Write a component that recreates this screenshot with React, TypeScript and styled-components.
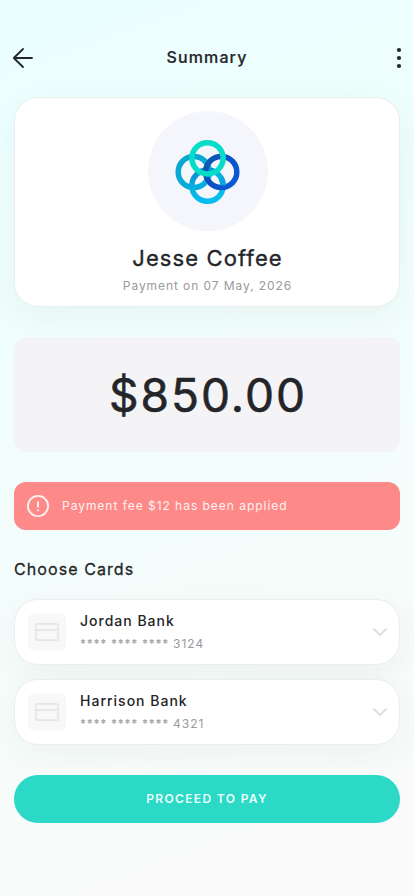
import React from "react";
import styled, { createGlobalStyle } from "styled-components";

const GlobalStyle = createGlobalStyle`
  *, *::before, *::after { box-sizing: border-box; }
  body { margin: 0; }
  svg { display: block; }
`;

const Screen = styled.main`
  display: flex;
  flex-direction: column;
  width: 100%;
  height: 896px;
  padding: 38px 14px 0;
  overflow: hidden;
  background: linear-gradient(160deg, #ebffff 0%, #f0fefc 35%, #f5fdfb 65%, #fafafa 92%);
  color: #242529;
  font-family: Inter, "Liberation Sans", sans-serif;
  letter-spacing: 1px;
`;

const Header = styled.header`
  display: grid;
  grid-template-columns: 24px 1fr 24px;
  align-items: center;
  height: 40px;
  margin: 0 -3px 19px -3px;
`;

const IconButton = styled.button`
  display: flex;
  justify-content: flex-end;
  padding: 0;
  border: 0;
  background: none;
  color: #242529;
`;

const Title = styled.h1`
  margin: 0;
  padding-bottom: 2px;
  font-size: 16px;
  line-height: 24px;
  font-weight: 500;
  letter-spacing: 1.15px;
  text-align: center;
  -webkit-text-stroke: 0.2px currentColor;
`;

const Panel = styled.section`
  background: #fff;
  border: 1px solid #ebeeee;
  border-radius: 24px;
  box-shadow: 0 8px 32px rgba(40, 50, 50, 0.05);
`;

const Payee = styled(Panel)`
  display: flex;
  flex-direction: column;
  align-items: center;
  flex: 0 0 210px;
  padding-top: 13px;
`;

const Avatar = styled.div`
  display: grid;
  place-items: center;
  width: 120px;
  height: 120px;
  margin-left: 2px;
  border-radius: 50%;
  background: #f4f6fb;
`;

const PayeeName = styled.h2`
  margin: 11px 0 0 1px;
  font-size: 22px;
  line-height: 32px;
  font-weight: 400;
  letter-spacing: 1.1px;
  -webkit-text-stroke: 0.35px currentColor;
`;

const PayeeDate = styled.p`
  margin: 3px 0 0 1px;
  color: #9a9a9c;
  font-size: 12px;
  line-height: 18px;
  letter-spacing: 0.92px;
`;

const Amount = styled.section`
  display: grid;
  place-items: center;
  flex: 0 0 115px;
  margin-top: 30px;
  padding-left: 2px;
  border-radius: 12px;
  background: #f4f4f7;
  font-size: 46px;
  font-weight: 400;
  letter-spacing: 2px;
  -webkit-text-stroke: 0.6px currentColor;
`;

const Notice = styled.section`
  display: flex;
  align-items: center;
  gap: 12px;
  flex: 0 0 48px;
  margin-top: 30px;
  padding: 0 12px;
  border-radius: 12px;
  background: #fd8a89;
  color: #fff1f1;
  font-size: 12px;
  letter-spacing: 0.97px;
`;

const NoticeText = styled.span`
  padding-bottom: 2px;
`;

const SectionTitle = styled.h3`
  margin: 27px 0 18px;
  font-size: 16px;
  line-height: 24px;
  font-weight: 400;
  letter-spacing: 1.08px;
  -webkit-text-stroke: 0.3px currentColor;
`;

const CardList = styled.div`
  display: flex;
  flex-direction: column;
  gap: 14px;
`;

const BankCard = styled(Panel)`
  display: flex;
  align-items: center;
  height: 66px;
  padding: 0 7px 0 13px;
`;

const CardIcon = styled.div`
  display: grid;
  place-items: center;
  width: 38px;
  height: 38px;
  border-radius: 7px;
  background: #f8f8f8;
`;

const CardText = styled.div`
  flex: 1;
  margin-left: 14px;
`;

const BankName = styled.div`
  font-size: 14px;
  line-height: 20px;
  font-weight: 500;
`;

const CardNumber = styled.div`
  color: #9a9a9c;
  font-size: 12px;
  line-height: 18px;
  margin-top: 4px;
`;

const Mask = styled.span`
  letter-spacing: 0.72px;
`;

const PayButton = styled.button`
  height: 48px;
  margin-top: 30px;
  padding: 0;
  border: 0;
  border-radius: 24px;
  background: #2bd9c6;
  color: #e9fffb;
  font: 600 12px/18px Inter, "Liberation Sans", sans-serif;
  letter-spacing: 1.35px;
`;

const BackIcon = () => (
  <svg width="24" height="24" viewBox="0 0 24 24" fill="none" stroke="currentColor" strokeWidth="1.8" strokeLinecap="round" strokeLinejoin="round">
    <path d="M21 12H3M12 3L2.8 12L12 21" />
  </svg>
);

const MoreIcon = () => (
  <svg width="8" height="24" viewBox="0 0 8 24" fill="currentColor">
    <circle cx="4" cy="4" r="2.1" />
    <circle cx="4" cy="12" r="2.1" />
    <circle cx="4" cy="20" r="2.1" />
  </svg>
);

const RingsLogo = () => (
  <svg width="66" height="66" viewBox="0.5 -0.5 66 66" fill="none" strokeWidth="5.5">
    <defs>
      <linearGradient id="left" x1="0" y1="0" x2="1" y2="1">
        <stop offset="0" stopColor="#0aa5cf" />
        <stop offset="1" stopColor="#05b0e3" />
      </linearGradient>
      <linearGradient id="right" x1="0" y1="0" x2="1" y2="0.5">
        <stop offset="0" stopColor="#0f5fae" />
        <stop offset="0.4" stopColor="#0b4ec0" />
        <stop offset="1" stopColor="#0c57d3" />
      </linearGradient>
      <linearGradient id="bottom" x1="0" y1="0" x2="0.5" y2="1">
        <stop offset="0" stopColor="#0885c8" />
        <stop offset="0.5" stopColor="#09b3e5" />
        <stop offset="1" stopColor="#04beee" />
      </linearGradient>
    </defs>
    <circle cx="19.3" cy="33.5" r="15.6" stroke="url(#left)" />
    <circle cx="33" cy="47.2" r="15.6" stroke="url(#bottom)" />
    <circle cx="46.7" cy="33.5" r="15.6" stroke="url(#right)" />
    <path d="M46.5 39.5A15.6 15.6 0 0 1 48.6 47" stroke="#09a7df" />
    <circle cx="33" cy="19.8" r="15.6" stroke="#06ddc9" />
  </svg>
);

const AlertIcon = () => (
  <svg width="24" height="24" viewBox="0 0 24 24" fill="none" stroke="currentColor" strokeWidth="1.9" strokeLinecap="round">
    <circle cx="12" cy="12" r="10.1" />
    <path d="M12 8V12.8M12 16.1V16.2" />
  </svg>
);

const CreditCardIcon = () => (
  <svg width="24" height="18" viewBox="0 0 24 18" fill="none" stroke="#e6e6e6" strokeWidth="1.7">
    <rect x="0.85" y="0.85" width="22.3" height="16.3" rx="2" />
    <path d="M1 7H23" />
  </svg>
);

const ChevronIcon = () => (
  <svg width="24" height="24" viewBox="0 0 24 24" fill="none" stroke="#dfdfdf" strokeWidth="2" strokeLinecap="round" strokeLinejoin="round">
    <path d="M6 9L12 15L18 9" />
  </svg>
);

const cards = [
  { bank: "Jordan Bank", digits: "3124" },
  { bank: "Harrison Bank", digits: "4321" },
];

export default function App() {
  return (
    <>
      <GlobalStyle />
      <Screen>
        <Header>
          <IconButton aria-label="Back"><BackIcon /></IconButton>
          <Title>Summary</Title>
          <IconButton aria-label="More options"><MoreIcon /></IconButton>
        </Header>
        <Payee>
          <Avatar><RingsLogo /></Avatar>
          <PayeeName>Jesse Coffee</PayeeName>
          <PayeeDate>Payment on 07 May, 2026</PayeeDate>
        </Payee>
        <Amount>$850.00</Amount>
        <Notice>
          <AlertIcon />
          <NoticeText>Payment fee $12 has been applied</NoticeText>
        </Notice>
        <SectionTitle>Choose Cards</SectionTitle>
        <CardList>
          {cards.map((card) => (
            <BankCard key={card.bank}>
              <CardIcon><CreditCardIcon /></CardIcon>
              <CardText>
                <BankName>{card.bank}</BankName>
                <CardNumber><Mask>**** **** **** </Mask>{card.digits}</CardNumber>
              </CardText>
              <ChevronIcon />
            </BankCard>
          ))}
        </CardList>
        <PayButton>PROCEED TO PAY</PayButton>
      </Screen>
    </>
  );
}
